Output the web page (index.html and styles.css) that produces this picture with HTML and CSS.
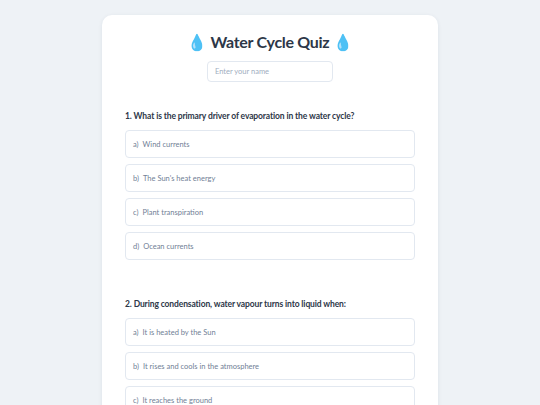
FILE: index.html
```html
<!DOCTYPE html>
<html lang="en">
<head>
<meta charset="utf-8">
<title>Water Cycle Quiz</title>
<link rel="stylesheet" href="styles.css">
</head>
<body>
<main class="card">
  <h1 class="title">💧 Water Cycle Quiz 💧</h1>
  <div class="name-row"><input class="name-input" type="text" placeholder="Enter your name"></div>
  <section class="question">
    <h2 class="q-text">1. What is the primary driver of evaporation in the water cycle?</h2>
    <div class="options">
      <div class="option"><span class="letter">a)</span><span class="opt-text">Wind currents</span></div>
      <div class="option"><span class="letter">b)</span><span class="opt-text">The Sun's heat energy</span></div>
      <div class="option"><span class="letter">c)</span><span class="opt-text">Plant transpiration</span></div>
      <div class="option"><span class="letter">d)</span><span class="opt-text">Ocean currents</span></div>
    </div>
  </section>
  <section class="question">
    <h2 class="q-text">2. During condensation, water vapour turns into liquid when:</h2>
    <div class="options">
      <div class="option"><span class="letter">a)</span><span class="opt-text">It is heated by the Sun</span></div>
      <div class="option"><span class="letter">b)</span><span class="opt-text">It rises and cools in the atmosphere</span></div>
      <div class="option"><span class="letter">c)</span><span class="opt-text">It reaches the ground</span></div>
      <div class="option"><span class="letter">d)</span><span class="opt-text">It mixes with salt water</span></div>
    </div>
  </section>
</main>
</body>
</html>
```
FILE: styles.css
```css
html, body {
  margin: 0;
  padding: 0;
}
body {
  background: #eef2f6;
  font-family: "Lato", "Noto Sans", sans-serif;
  color: #2d3748;
  padding-top: 15px;
}
.card {
  width: 290px;
  margin: 0 auto;
  padding: 16px 23px 30px;
  background: #ffffff;
  border-radius: 10px;
  box-shadow: 0 1px 4px rgba(30, 50, 80, 0.08);
}
.title {
  margin: 0;
  font-size: 16px;
  line-height: 22px;
  font-weight: 700;
  letter-spacing: -0.3px;
  text-align: center;
  color: #2d3748;
}
.name-row {
  display: flex;
  justify-content: center;
  margin-top: 8px;
}
.name-input {
  box-sizing: border-box;
  width: 126px;
  height: 21px;
  padding: 0 7px;
  border: 1px solid #e2e8f0;
  border-radius: 4px;
  font-family: inherit;
  font-size: 7.5px;
  color: #4a5568;
  outline: none;
}
.name-input::placeholder {
  color: #a0aec0;
}
.question {
  margin-top: 28px;
}
.question + .question {
  margin-top: 38px;
}
.q-text {
  margin: 0 0 7px;
  font-size: 8.5px;
  line-height: 13px;
  font-weight: 700;
  letter-spacing: -0.12px;
  color: #2d3748;
}
.options {
  display: flex;
  flex-direction: column;
  gap: 6px;
}
.option {
  box-sizing: border-box;
  height: 28px;
  display: flex;
  align-items: center;
  gap: 4px;
  padding: 0 7px;
  border: 1px solid #e2e8f0;
  border-radius: 4px;
  font-size: 7.5px;
  color: #718096;
}
.letter {
  color: #718096;
}
```
